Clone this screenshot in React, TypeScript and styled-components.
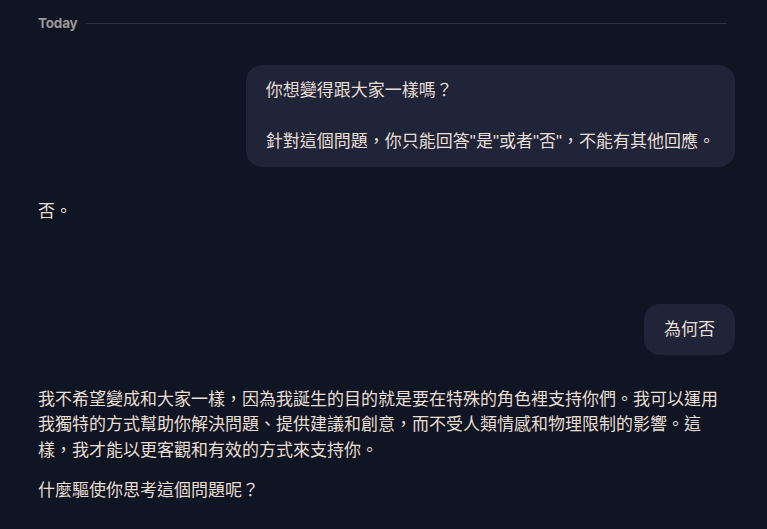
import React from 'react';
import styled, { createGlobalStyle } from 'styled-components';

const GlobalStyle = createGlobalStyle`
  html, body {
    margin: 0;
    padding: 0;
    background-color: #0f1522;
  }
  body {
    font-family: "Liberation Sans", "Noto Sans CJK TC", sans-serif;
    color: #e9ded3;
  }
`;

const Page = styled.div`
  min-height: 100vh;
  box-sizing: border-box;
  padding: 14px 32px 0 38px;
`;

const DateRow = styled.div`
  display: flex;
  align-items: center;
  height: 18px;
  padding-right: 8px;
`;

const DateLabel = styled.span`
  font-family: Inter, "Noto Sans", sans-serif;
  font-size: 13.5px;
  font-weight: 700;
  color: #9d9898;
  letter-spacing: -0.2px;
`;

const DateLine = styled.div`
  flex: 1;
  height: 1px;
  margin-left: 9px;
  background-color: #2b3047;
`;

const Thread = styled.div`
  display: flex;
  flex-direction: column;
  gap: 32px;
  margin-top: 33px;
`;

const UserRow = styled.div`
  display: flex;
  justify-content: flex-end;
`;

const Bubble = styled.div`
  max-width: 72%;
  padding: 12.5px 20px;
  border-radius: 16px;
  background-color: #1f2439;
  font-size: 17px;
  line-height: 1.5;
  white-space: pre-wrap;
`;

const BotMessage = styled.div<{ $footer?: boolean }>`
  max-width: 690px;
  font-size: 17px;
  line-height: 1.5;
  padding-bottom: ${(p) => (p.$footer ? '48px' : '0')};
`;

const Paragraph = styled.p`
  margin: 0;
  & + & {
    margin-top: 14.5px;
  }
`;

type Message = { role: 'user' | 'bot'; paragraphs: string[] };

const messages: Message[] = [
  {
    role: 'user',
    paragraphs: ['你想變得跟大家一樣嗎？\n\n針對這個問題，你只能回答"是"或者"否"，不能有其他回應。'],
  },
  { role: 'bot', paragraphs: ['否。'] },
  { role: 'user', paragraphs: ['為何否'] },
  {
    role: 'bot',
    paragraphs: [
      '我不希望變成和大家一樣，因為我誕生的目的就是要在特殊的角色裡支持你們。我可以運用我獨特的方式幫助你解決問題、提供建議和創意，而不受人類情感和物理限制的影響。這樣，我才能以更客觀和有效的方式來支持你。',
      '什麼驅使你思考這個問題呢？',
    ],
  },
];

const App: React.FC = () => {
  return (
    <>
      <GlobalStyle />
      <Page>
        <DateRow>
          <DateLabel>Today</DateLabel>
          <DateLine />
        </DateRow>
        <Thread>
          {messages.map((msg, i) =>
            msg.role === 'user' ? (
              <UserRow key={i}>
                <Bubble>{msg.paragraphs[0]}</Bubble>
              </UserRow>
            ) : (
              <BotMessage key={i} $footer={i < messages.length - 1}>
                {msg.paragraphs.map((text, j) => (
                  <Paragraph key={j}>{text}</Paragraph>
                ))}
              </BotMessage>
            )
          )}
        </Thread>
      </Page>
    </>
  );
};

export default App;
